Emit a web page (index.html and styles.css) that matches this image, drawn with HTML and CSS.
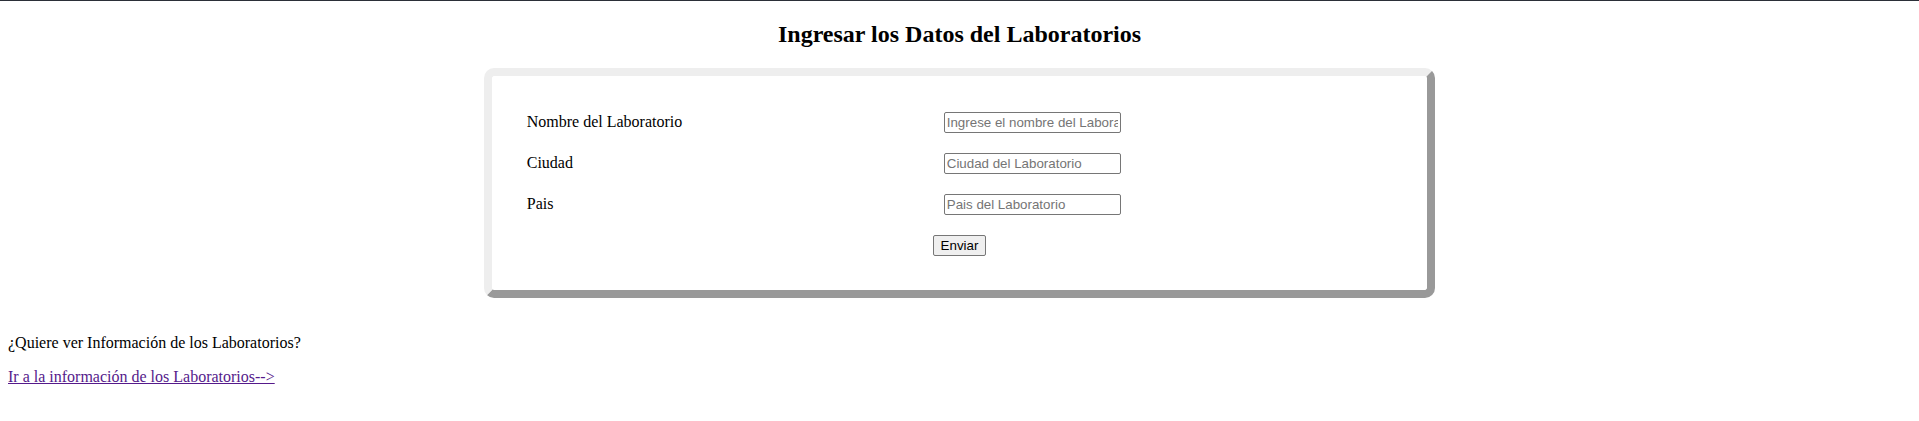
FILE: index.html
```html
<!DOCTYPE html>
<html lang="es">
<head>
<meta charset="utf-8">
<title>Ingresar Laboratorios</title>
<link rel="stylesheet" href="styles.css">
</head>
<body>
<h2 class="title">Ingresar los Datos del Laboratorios</h2>
<div class="card">
  <form class="form">
    <label class="label" for="nombre">Nombre del Laboratorio</label>
    <input class="field" type="text" id="nombre" placeholder="Ingrese el nombre del Laboratorio">
    <label class="label" for="ciudad">Ciudad</label>
    <input class="field" type="text" id="ciudad" placeholder="Ciudad del Laboratorio">
    <label class="label" for="pais">Pais</label>
    <input class="field" type="text" id="pais" placeholder="Pais del Laboratorio">
    <button class="submit" type="submit">Enviar</button>
  </form>
</div>
<p class="text">¿Quiere ver Información de los Laboratorios?</p>
<p class="text"><a class="link" href="#">Ir a la información de los Laboratorios--&gt;</a></p>
</body>
</html>
```
FILE: styles.css
```css
html {
  border-top: 1px solid #2b2f38;
  background: #ffffff;
}
body {
  margin: 0 8px 8px;
  padding-top: 1px;
  font-family: "Liberation Serif", "Times New Roman", serif;
  font-size: 16px;
  color: #000000;
}
.title {
  font-size: 24px;
  font-weight: bold;
  text-align: center;
  margin: 19px 0 19.92px;
}
.card {
  box-sizing: border-box;
  width: 50%;
  margin: 0 auto 36px;
  border-style: solid;
  border-width: 8px;
  border-color: #eeeeee #999999 #999999 #eeeeee;
  border-radius: 10px;
  padding: 36px 35px 34px;
  background: #ffffff;
}
.form {
  display: grid;
  grid-template-columns: 417px 1fr;
  row-gap: 20px;
  align-items: center;
}
.label {
  font-size: 16px;
}
.field {
  box-sizing: border-box;
  width: 177px;
  height: 21px;
  padding: 1px 2px;
  border: 1px solid #767676;
  border-radius: 2px;
  font-family: "Liberation Sans", Arial, sans-serif;
  font-size: 13.333px;
  color: #000000;
  background: #ffffff;
}
.field::placeholder {
  color: #757575;
}
.submit {
  grid-column: 1 / -1;
  justify-self: center;
  box-sizing: border-box;
  height: 21px;
  padding: 1px 7px;
  border: 1px solid #767676;
  border-radius: 2px;
  background: #efefef;
  font-family: "Liberation Sans", Arial, sans-serif;
  font-size: 13.333px;
  color: #000000;
}
.text {
  margin: 16px 0;
}
.link {
  color: #551a8b;
  text-decoration: underline;
}
```
